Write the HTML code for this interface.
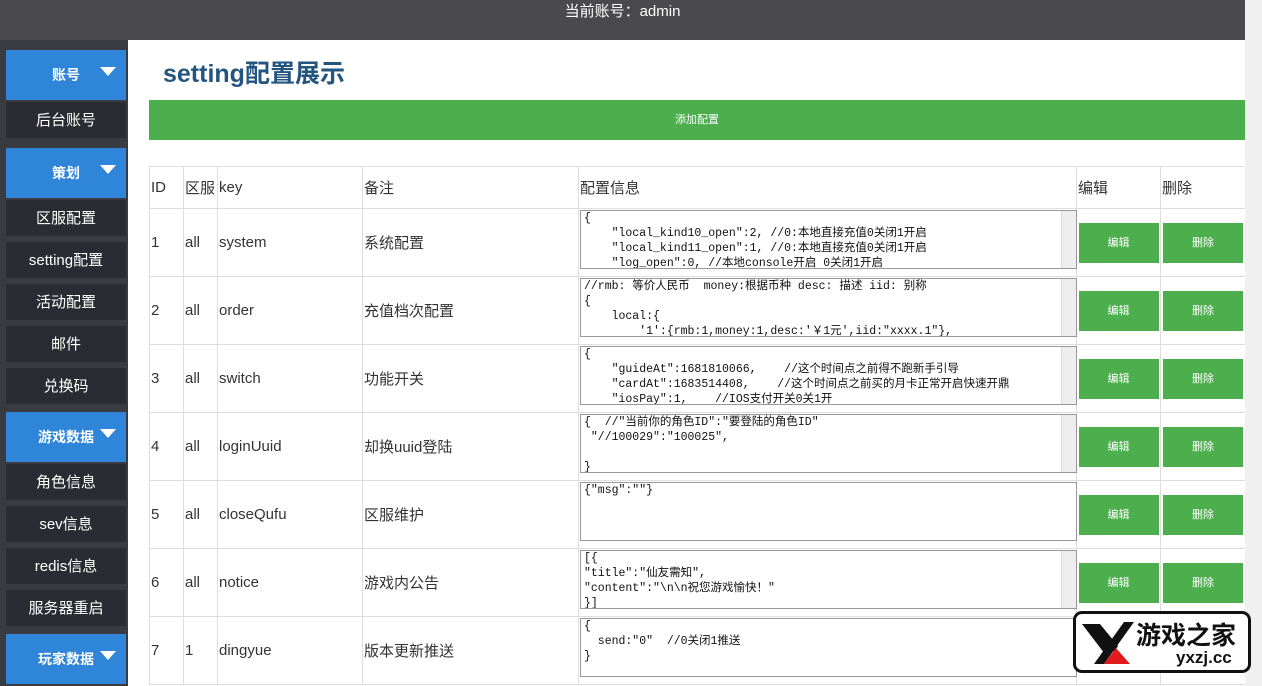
<!DOCTYPE html>
<html><head><meta charset="utf-8"><style>
*{margin:0;padding:0;box-sizing:border-box}
body{width:1262px;height:686px;overflow:hidden;background:#3b3c42;font-family:"Liberation Sans","Noto Sans CJK SC",sans-serif;position:relative}
.top{position:absolute;left:0;top:0;width:1245px;height:40px;background:#4a4a4c;color:#fff;font-size:15px;text-align:center;line-height:24px}
.side{position:absolute;left:0;top:40px;width:128px;height:646px;background:#3a3b42}
.b{position:absolute;left:6px;width:120px;height:50px;background:#2f86d8;color:#fff;font-weight:bold;font-size:14px;line-height:50px;text-align:center}
.b:after{content:"";position:absolute;right:10px;top:17px;border-left:8px solid transparent;border-right:8px solid transparent;border-top:9px solid #fff}
.i{position:absolute;left:6px;width:120px;height:36px;background:#2b2c33;color:#fff;font-size:15px;line-height:38px;text-align:center}
.main{position:absolute;left:128px;top:40px;width:1117px;height:646px;background:#fff}
h1{position:absolute;left:35px;top:14px;font-size:25px;color:#24557f;font-weight:bold}
.add{position:absolute;left:21px;top:60px;width:1096px;height:40px;background:#4cae4c;color:#fff;font-size:11px;text-align:center;line-height:40px}
table{position:absolute;left:21px;top:126px;border-collapse:collapse;font-size:15px;color:#333;table-layout:fixed;width:1096px}
td{border:1px solid #ddd;height:68px;vertical-align:middle;padding:0 1px}
tr.h td{height:42px}
.ta{width:497px;height:59px;border:1px solid #999;font-family:"Liberation Mono","Noto Sans CJK SC",monospace;font-size:11.5px;line-height:15px;padding:0 3px;white-space:pre;overflow:hidden;position:relative;color:#111;margin-top:-6px}
.ta.s:after{content:"";position:absolute;right:0;top:0;width:14px;height:100%;background:#eee;border-left:1px solid #ddd}
.g{display:block;width:80px;height:40px;background:#4cae4c;color:#fff;font-size:11px;line-height:40px;text-align:center;margin:0 auto}
.sb{position:absolute;left:1245px;top:0;width:17px;height:686px;background:#f0f0f0}
.th{position:absolute;left:1248px;top:14px;width:11px;height:204px;background:#c1c1c1}
.logo{position:absolute;left:1073px;top:611px;width:178px;height:62px;background:#fff;border:3px solid #111;border-radius:9px}
</style></head><body>
<div class="top">当前账号：admin</div>
<div class="side">
<div class="b" style="top:10px">账号</div>
<div class="i" style="top:62px">后台账号</div>
<div class="b" style="top:108px">策划</div>
<div class="i" style="top:160px">区服配置</div>
<div class="i" style="top:202px">setting配置</div>
<div class="i" style="top:244px">活动配置</div>
<div class="i" style="top:286px">邮件</div>
<div class="i" style="top:328px">兑换码</div>
<div class="b" style="top:372px">游戏数据</div>
<div class="i" style="top:424px">角色信息</div>
<div class="i" style="top:466px">sev信息</div>
<div class="i" style="top:508px">redis信息</div>
<div class="i" style="top:550px">服务器重启</div>
<div class="b" style="top:594px">玩家数据</div>
</div>
<div class="main">
<h1>setting配置展示</h1>
<div class="add">添加配置</div>
<table>
<colgroup><col style="width:34px"><col style="width:34px"><col style="width:145px"><col style="width:216px"><col style="width:498px"><col style="width:84px"><col style="width:85px"></colgroup>
<tr class="h"><td>ID</td><td>区服</td><td>key</td><td>备注</td><td>配置信息</td><td>编辑</td><td>删除</td></tr>
<tr><td>1</td><td>all</td><td>system</td><td>系统配置</td><td><div class="ta s">{
    "local_kind10_open":2, //0:本地直接充值0关闭1开启
    "local_kind11_open":1, //0:本地直接充值0关闭1开启
    "log_open":0, //本地console开启 0关闭1开启</div></td><td><span class="g">编辑</span></td><td><span class="g">删除</span></td></tr>
<tr><td>2</td><td>all</td><td>order</td><td>充值档次配置</td><td><div class="ta s">//rmb: 等价人民币  money:根据币种 desc: 描述 iid: 别称
{
    local:{
        '1':{rmb:1,money:1,desc:'￥1元',iid:"xxxx.1"},</div></td><td><span class="g">编辑</span></td><td><span class="g">删除</span></td></tr>
<tr><td>3</td><td>all</td><td>switch</td><td>功能开关</td><td><div class="ta s">{
    "guideAt":1681810066,    //这个时间点之前得不跑新手引导
    "cardAt":1683514408,    //这个时间点之前买的月卡正常开启快速开鼎
    "iosPay":1,    //IOS支付开关0关1开</div></td><td><span class="g">编辑</span></td><td><span class="g">删除</span></td></tr>
<tr><td>4</td><td>all</td><td>loginUuid</td><td>却换uuid登陆</td><td><div class="ta s">{  //"当前你的角色ID":"要登陆的角色ID"
 "//100029":"100025",

}</div></td><td><span class="g">编辑</span></td><td><span class="g">删除</span></td></tr>
<tr><td>5</td><td>all</td><td>closeQufu</td><td>区服维护</td><td><div class="ta">{"msg":""}</div></td><td><span class="g">编辑</span></td><td><span class="g">删除</span></td></tr>
<tr><td>6</td><td>all</td><td>notice</td><td>游戏内公告</td><td><div class="ta s">[{
"title":"仙友需知",
"content":"\n\n祝您游戏愉快！"
}]</div></td><td><span class="g">编辑</span></td><td><span class="g">删除</span></td></tr>
<tr><td>7</td><td>1</td><td>dingyue</td><td>版本更新推送</td><td><div class="ta">{
  send:"0"  //0关闭1推送
}</div></td><td><span class="g">编辑</span></td><td><span class="g">删除</span></td></tr>
</table>
</div>
<div class="sb"><div class="th"></div></div>
<div class="logo">
<svg width="60" height="56" style="position:absolute;left:2px;top:0">
<path d="M4 10 L16 10 L36 36 L30 44 Z" fill="#111"/><path d="M14 10 L22 10 L40 32 L36 38 Z" fill="#111"/>
<path d="M46 8 L56 8 L26 50 L16 50 Z" fill="#111"/><path d="M38 34 L52 50 L26 50 Z" fill="#e01b1b"/></svg>
<div style="position:absolute;left:60px;top:2px;font-size:25px;font-weight:bold;color:#111">游戏之家</div>
<div style="position:absolute;left:100px;top:34px;font-size:17px;font-weight:bold;color:#111">yxzj.cc</div>
</div>
</body></html>
